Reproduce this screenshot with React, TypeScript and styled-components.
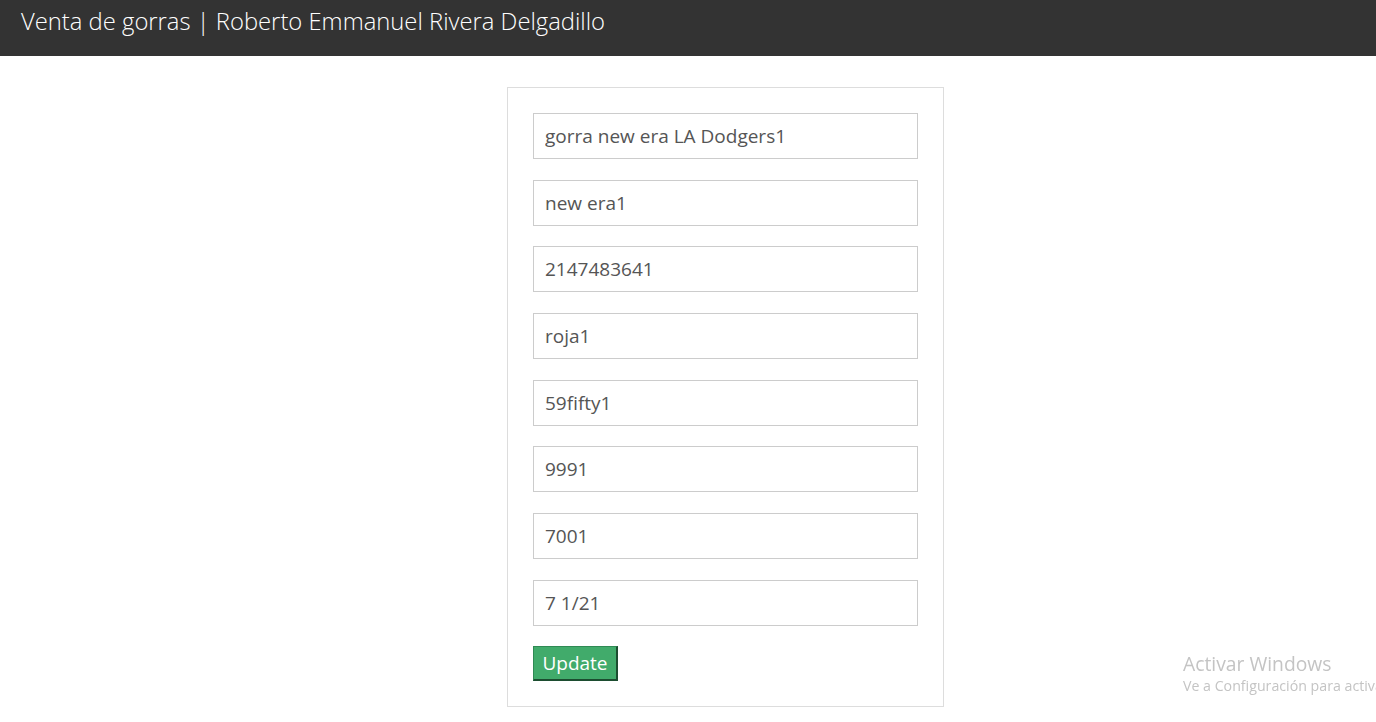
import React from "react";
import styled, { createGlobalStyle } from "styled-components";

const Global = createGlobalStyle`
  html, body { margin: 0; padding: 0; background: #fff; }
  body { font-family: "Open Sans", "Noto Sans", sans-serif; }
  * { box-sizing: border-box; }
`;

const Header = styled.header`
  height: 56px;
  background: #333333;
  display: flex;
  align-items: flex-start;
  padding: 5px 0 0 21px;
`;

const Title = styled.h1`
  margin: 0;
  font-size: 23.8px;
  font-weight: 300;
  color: #ffffff;
  line-height: 33px;
`;

const Main = styled.main`
  padding: 31px 0 0 507px;
`;

const Card = styled.form`
  width: 437px;
  border: 1px solid #dddddd;
  padding: 25px;
  display: flex;
  flex-direction: column;
  gap: 20.67px;
`;

const Field = styled.input`
  width: 385px;
  height: 46px;
  border: 1px solid #cccccc;
  padding: 0 11px;
  font-family: "Open Sans", "Noto Sans", sans-serif;
  font-size: 19px;
  color: #555555;
  background: #fff;
  outline: none;
`;

const Button = styled.button`
  align-self: flex-start;
  margin-top: -0.67px;
  height: 35px;
  width: 85px;
  padding: 0;
  background: #41ab6b;
  color: #ffffff;
  font-family: "Open Sans", "Noto Sans", sans-serif;
  font-size: 19px;
  border-style: solid;
  border-width: 1px 2px 2px 1px;
  border-color: #2f8a54 #1c4d30 #1c4d30 #2f8a54;
  line-height: 30px;
  cursor: pointer;
`;

const Watermark = styled.div`
  position: fixed;
  left: 1183px;
  top: 651px;
  font-family: "Open Sans", "Noto Sans", sans-serif;
  color: #c4c4c4;
  white-space: nowrap;
  pointer-events: none;
`;

const WmTitle = styled.div`
  font-size: 19.3px;
  line-height: 26px;
`;

const WmSub = styled.div`
  font-size: 14.2px;
  line-height: 18px;
`;

const values = [
  "gorra new era LA Dodgers1",
  "new era1",
  "2147483641",
  "roja1",
  "59fifty1",
  "9991",
  "7001",
  "7 1/21",
];

export default function App() {
  return (
    <>
      <Global />
      <Header>
        <Title>Venta de gorras | Roberto Emmanuel Rivera Delgadillo</Title>
      </Header>
      <Main>
        <Card onSubmit={(e) => e.preventDefault()}>
          {values.map((v, i) => (
            <Field key={i} defaultValue={v} />
          ))}
          <Button type="submit">Update</Button>
        </Card>
      </Main>
      <Watermark>
        <WmTitle>Activar Windows</WmTitle>
        <WmSub>Ve a Configuración para activar Windows.</WmSub>
      </Watermark>
    </>
  );
}
